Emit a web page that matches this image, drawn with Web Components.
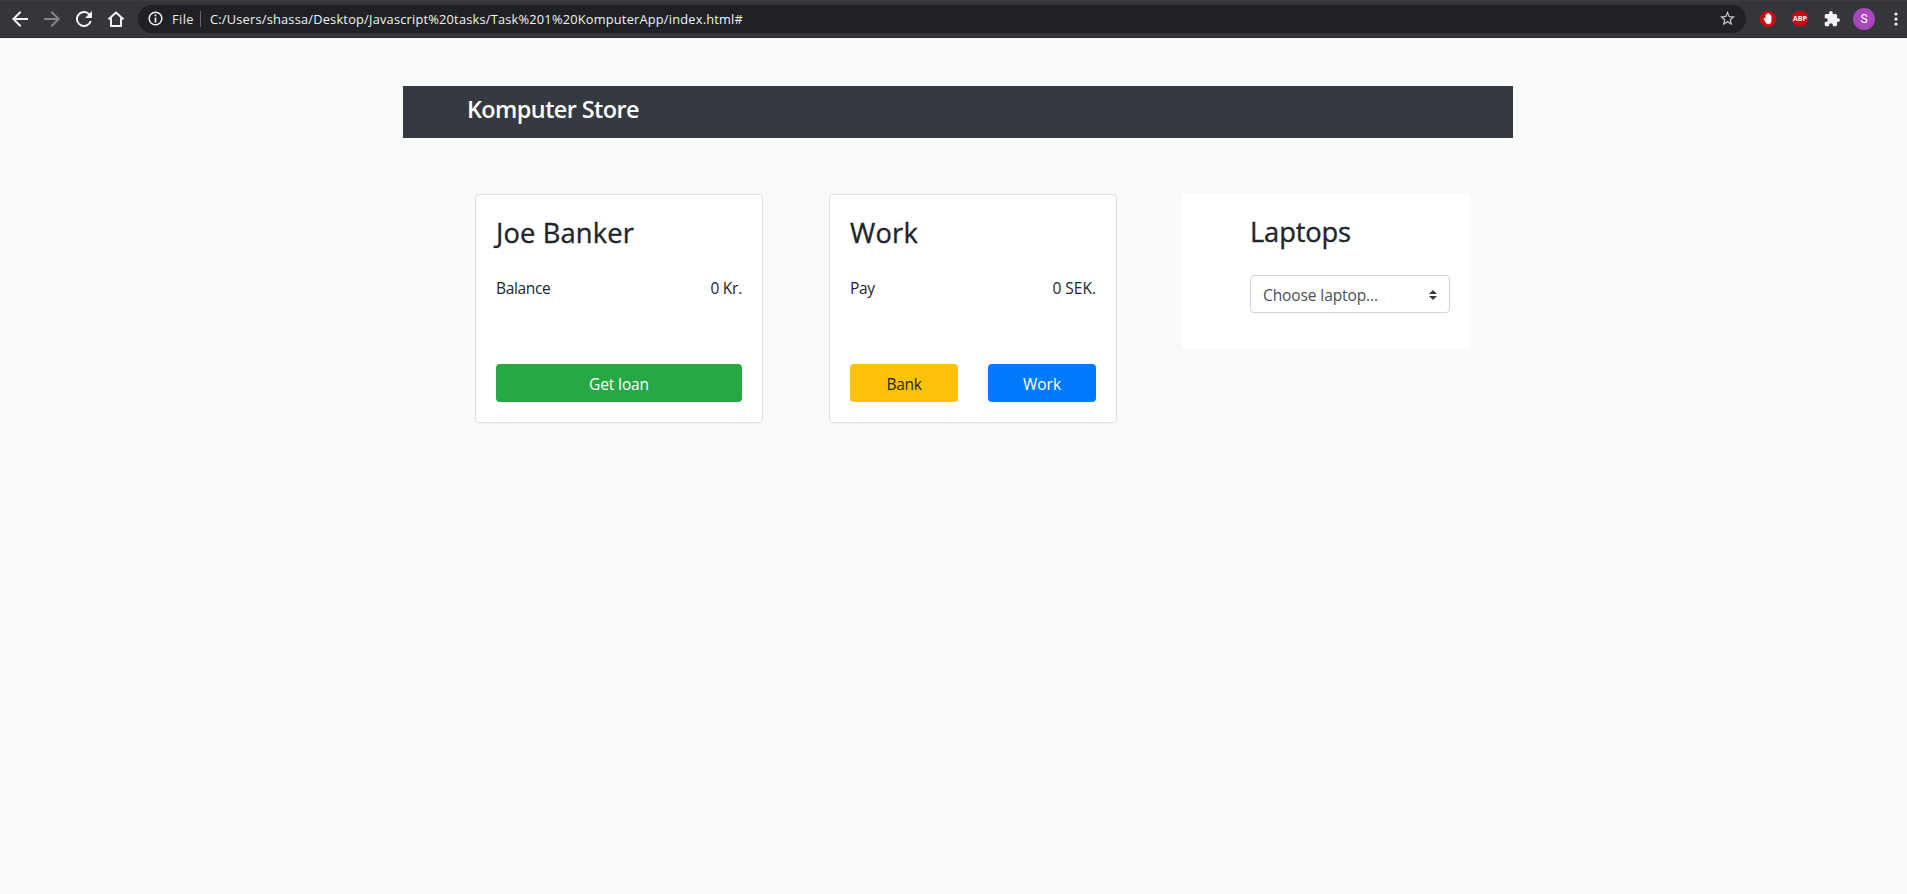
<!DOCTYPE html>
<html lang="en">
<head>
<meta charset="utf-8">
<title>Komputer Store</title>
<style>
body{margin:0;height:894px;overflow:hidden;background:#f8faf9;font-family:"Open Sans","Noto Sans",sans-serif;font-size:15.5px;line-height:24px;color:#212529}
</style>
</head>
<body>
<browser-bar></browser-bar>
<store-app></store-app>
<script>
const define = (name, html, init) => customElements.define(name, class extends HTMLElement {
  connectedCallback() {
    if (this.shadowRoot) return;
    const t = document.createElement('template');
    t.innerHTML = html;
    this.attachShadow({ mode: 'open' }).append(t.content.cloneNode(true));
    if (init) init(this, this.shadowRoot);
  }
});

// A label whose tracking is adjusted so that it spans the advance given in "span".
define('ui-label', `<style>:host{display:inline-block;white-space:nowrap}span{display:inline-block}</style><span><slot></slot></span>`, (el, root) => {
  const s = root.querySelector('span');
  const target = parseFloat(el.getAttribute('span'));
  const n = el.textContent.length;
  const gap = (target - s.getBoundingClientRect().width) / n;
  s.style.letterSpacing = gap.toFixed(3) + 'px';
});

define('ui-button', `<style>
:host{display:flex;flex:1;height:38px;box-sizing:border-box;padding-top:1px;border-radius:4px;align-items:center;justify-content:center;background:#28a745;color:#fff}
:host([kind=warning]){background:#ffc107;color:#212529}
:host([kind=primary]){background:#007bff}
</style><slot></slot>`);

define('store-card', `<style>
:host{display:flex;flex-direction:column;box-sizing:border-box;width:288px;height:229px;padding:21px 20px 20px;background:#fff;border:1px solid #dfdfdf;border-radius:4px}
h3{margin:0;font-size:27.3px;line-height:34px;font-weight:500;-webkit-text-stroke:.35px;height:34px}
.row{display:flex;justify-content:space-between;margin-top:26px}
.actions{display:flex;gap:30px;margin-top:auto}
</style><h3><slot name="title"></slot></h3><div class="row"><slot name="label"></slot><slot name="value"></slot></div><div class="actions"><slot></slot></div>`);

define('laptop-card', `<style>
:host{display:block;box-sizing:border-box;width:288px;height:155px;margin-left:-1px;padding:21px 20px 0 68px;background:#fff;border-radius:4px}
h3{margin:0;font-size:27.3px;line-height:34px;font-weight:500;-webkit-text-stroke:.35px;height:34px}
.select{display:flex;align-items:center;justify-content:space-between;box-sizing:border-box;width:200px;height:38px;margin-top:26px;padding:1px 12px 0;border:1px solid #ced4da;border-radius:4px;color:#495057}
svg{display:block}
</style><h3><ui-label span="101">Laptops</ui-label></h3>
<div class="select"><ui-label span="115">Choose laptop...</ui-label><svg width="8" height="10" viewBox="0 0 4 5"><path fill="#343a40" d="M2 0 0 2h4zm0 5L0 3h4z"/></svg></div>`);

define('store-app', `<style>
:host{display:block;width:1110px;margin:48px 0 0 403px}
header{height:52px;box-sizing:border-box;padding:7px 64px;background:#343a40;color:#fff;font-size:23.4px;line-height:32px;font-weight:600}
main{display:grid;grid-template-columns:288px 288px 288px;column-gap:66px;align-items:start;margin:56px 0 0 72px}
</style>
<header><ui-label span="172">Komputer Store</ui-label></header>
<main>
<store-card><ui-label slot="title" span="138">Joe Banker</ui-label><ui-label slot="label" span="54.5">Balance</ui-label><ui-label slot="value" span="31.5">0 Kr.</ui-label><ui-button><ui-label span="60">Get loan</ui-label></ui-button></store-card>
<store-card><ui-label slot="title" span="68">Work</ui-label><ui-label slot="label" span="24.5">Pay</ui-label><ui-label slot="value" span="43.5">0 SEK.</ui-label><ui-button kind="warning"><ui-label span="35">Bank</ui-label></ui-button><ui-button kind="primary"><ui-label span="38">Work</ui-label></ui-button></store-card>
<laptop-card></laptop-card>
</main>`);

define('browser-bar', `<style>
:host{display:flex;align-items:center;box-sizing:border-box;height:38px;background:linear-gradient(#3c3d41 0,#3c3d41 1px,#35363a 1px);border-bottom:1px solid #28292c;color:#fff;font-size:12.8px;line-height:18px}
svg{display:block;flex:none}
.nav{display:flex;gap:16px;padding-left:12px;width:126px;margin-right:12px;box-sizing:border-box}
.omni{display:flex;align-items:center;box-sizing:border-box;width:1608px;height:28px;border-radius:14px;background:#202124;padding:0 11px 0 10px;color:#f1f3f4}
ui-label{margin-top:1px}
.file{margin-left:9px;color:#e8eaed}
i{width:1px;height:16px;background:#6b6560;margin:0 9px 0 6px}
.star{margin-left:auto}
.ext{display:flex;align-items:center;margin-left:14px}
.avatar{display:grid;place-items:center;width:22px;height:22px;margin-left:13px;border-radius:50%;background:#ab47bc;font:12px/22px Roboto,sans-serif;color:#fff}
.abp{display:grid;place-items:center;width:16px;height:16px;margin-left:16px;background:#c70d12;clip-path:polygon(30% 0,70% 0,100% 30%,100% 70%,70% 100%,30% 100%,0 70%,0 30%);font:bold 7px/16px "Open Sans",sans-serif;color:#fff}
.abp ui-label{margin:0}
</style>
<div class="nav">
<svg width="16" height="16" viewBox="4 4 16 16"><path fill="#f1f3f4" d="M20 11H7.8l5.6-5.6L12 4l-8 8 8 8 1.4-1.4L7.8 13H20z"/></svg>
<svg width="16" height="16" viewBox="4 4 16 16"><path fill="#85868a" d="m12 4-1.4 1.4 5.6 5.6H4v2h12.2l-5.6 5.6L12 20l8-8z"/></svg>
<svg width="16" height="16" viewBox="4 4 16 16"><path fill="#f1f3f4" d="M17.65 6.35A8 8 0 1 0 19.73 14h-2.08A6 6 0 1 1 12 6c1.66 0 3.14.69 4.22 1.78L13 11h7V4z"/></svg>
<svg width="18" height="16" viewBox="0 0 18 16" style="margin-left:-1px"><path fill="none" stroke="#f1f3f4" stroke-width="2" d="M1.5 8.3 9 1.5l7.500 6.800M4 7v8h10V7"/></svg>
</div>
<div class="omni">
<svg width="15" height="15" viewBox="0 0 15 15"><circle cx="7.5" cy="7.5" r="6.3" fill="none" stroke="#f1f3f4" stroke-width="1.5"/><path stroke="#f1f3f4" stroke-width="1.7" d="M7.5 3.6v1.7M7.5 6.5v5"/></svg>
<ui-label class="file" span="22">File</ui-label><i></i><ui-label span="533">C:/Users/shassa/Desktop/Javascript%20tasks/Task%201%20KomputerApp/index.html#</ui-label>
<svg class="star" width="15" height="15" viewBox="2 2 20 20"><path fill="#c7cbd0" d="m22 9.24-7.19-.62L12 2 9.19 8.63 2 9.24l5.46 4.73L5.82 21 12 17.27 18.18 21l-1.63-7.03zM12 15.4l-3.76 2.27 1-4.28-3.32-2.88 4.38-.38L12 6.1l1.71 4.04 4.38.38-3.32 2.88 1 4.28z"/></svg>
</div>
<div class="ext">
<svg width="16" height="16" viewBox="0 0 16 16"><path fill="#c70d12" d="M5 0h6l5 5v6l-5 5H5l-5-5V5z"/><path fill="#fff" stroke="#fff" stroke-width=".4" d="M4 8c-.4-.9.6-1.400 1.200-.6l.6 1V4.300c0-.9 1-.9 1 0V7.500V3.300c0-.9 1.100-.9 1.100 0V7.500V3c0-.9 1.100-.9 1.100 0v4.500V3.700c0-.9 1.100-.9 1.100 0V8V5c0-.9 1.100-.9 1.100 0v5c0 2-1 3-2.700 3-1.600 0-2.300-.6-2.900-1.900z"/></svg>
<div class="abp"><ui-label span="14">ABP</ui-label></div>
<svg width="16" height="16" viewBox="1 1 22 22" style="margin-left:16px"><path fill="#f1f3f4" d="M20.5 11H19V7c0-1.1-.9-2-2-2h-4V3.500a2.500 2.500 0 0 0-5 0V5H4c-1.100 0-1.990.9-1.990 2v3.800H3.500c1.490 0 2.700 1.210 2.700 2.700s-1.210 2.700-2.700 2.700H2V20c0 1.100.9 2 2 2h3.800v-1.500c0-1.490 1.210-2.700 2.700-2.700s2.700 1.210 2.700 2.700V22H17c1.100 0 2-.9 2-2v-4h1.500a2.500 2.500 0 0 0 0-5z"/></svg>
<div class="avatar">S</div>
<svg width="4" height="14" viewBox="0 0 4 14" style="margin-left:19px"><g fill="#f1f3f4"><circle cx="2" cy="2" r="1.6"/><circle cx="2" cy="7" r="1.6"/><circle cx="2" cy="12" r="1.6"/></g></svg>
</div>`);
</script>
</body>
</html>
